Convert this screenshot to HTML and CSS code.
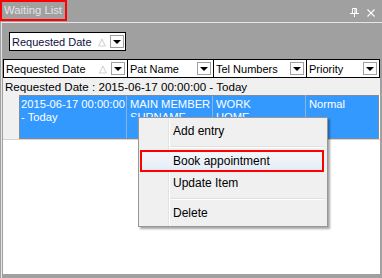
FILE: index.html
```html
<!DOCTYPE html>
<html lang="en">
<head>
    <meta charset="UTF-8">
    <title>Waiting List</title>
    <link rel="stylesheet" href="styles.css">
</head>
<body>

    <div class="window">
        <!-- Barre de titre du panneau -->
        <div class="titlebar">
            <div class="title">Waiting List</div>
            <div class="tools">
                <svg width="9" height="9" viewBox="0 0 9 9">
                    <path d="M2.5 0.5h4v5h-4z M0 5.5h9 M4.5 5.5v3.5" fill="none" stroke="#fff" stroke-width="1"/>
                    <path d="M5 1v4.5" stroke="#fff" stroke-width="1"/>
                </svg>
                <svg width="8" height="8" viewBox="0 0 8 8">
                    <path d="M0.5 0.5l7 7 M7.5 0.5l-7 7" stroke="#fff" stroke-width="1.1"/>
                </svg>
            </div>
        </div>

        <div class="panel">
            <!-- Zone de regroupement -->
            <div class="groupbar">
                <div class="chip">
                    <span class="chip-text">Requested Date</span>
                    <span class="sort">&#9651;</span>
                    <span class="dd"></span>
                </div>
            </div>

            <!-- Grille -->
            <div class="grid">
                <div class="grid-head">
                    <div class="hcell c1"><span>Requested Date</span><span class="sort">&#9651;</span><span class="dd"></span></div>
                    <div class="hcell c2"><span>Pat Name</span><span class="dd"></span></div>
                    <div class="hcell c3"><span>Tel Numbers</span><span class="dd"></span></div>
                    <div class="hcell c4"><span>Priority</span><span class="dd"></span></div>
                </div>

                <div class="group-row">Requested Date : 2015-06-17 00:00:00 - Today</div>

                <div class="data-row">
                    <div class="indent"></div>
                    <div class="row-cells">
                        <div class="dcell d1">2015-06-17 00:00:00<br>- Today</div>
                        <div class="dcell d2"><div class="clip">MAIN MEMBER<br>SURNAME</div></div>
                        <div class="dcell d3"><div class="clip">WORK<br>HOME</div></div>
                        <div class="dcell d4">Normal</div>
                    </div>
                </div>

                <div class="grid-empty"></div>
            </div>
        </div>

        <!-- Menu contextuel -->
        <div class="menu">
            <div class="item">Add entry</div>
            <div class="sep"></div>
            <div class="item active">Book appointment</div>
            <div class="item">Update Item</div>
            <div class="sep"></div>
            <div class="item">Delete</div>
        </div>
    </div>

</body>
</html>
```

FILE: styles.css
```css
body {
    margin: 0;
    padding: 0;
    background-color: #a0a0a0;
    font-family: 'Liberation Sans', Arial, sans-serif;
    font-size: 11px;
    color: #000;
}

.window {
    position: relative;
    width: 382px;
    height: 278px;
    display: flex;
    flex-direction: column;
    overflow: hidden;
}

/* Barre de titre */
.titlebar {
    height: 22px;
    display: flex;
    align-items: flex-start;
    justify-content: space-between;
}

.title {
    height: 17px;
    padding: 0 3px 0 2px;
    border: 2px solid #ff0000;
    color: #e4e4e4;
    line-height: 17px;
    font-size: 11.3px;
}

.tools {
    display: flex;
    align-items: center;
    gap: 8px;
    padding: 8px 7px 0 0;
}

.tools svg {
    display: block;
}

/* Panneau */
.panel {
    flex: 1;
    margin-left: 1px;
    border-left: 1px solid #e6e6e6;
    border-top: 1px solid #e6e6e6;
    display: flex;
    flex-direction: column;
}

.groupbar {
    height: 36px;
    box-sizing: border-box;
    padding: 9px 0 0 7px;
}

.chip {
    width: 117px;
    height: 19px;
    box-sizing: border-box;
    border: 1px solid #000;
    background-color: #fff;
    display: flex;
    align-items: center;
    padding-left: 2px;
    font-size: 11px;
    color: #101040;
}

.chip-text {
    flex: 1;
}

.sort {
    color: #b4b4b4;
    font-size: 10px;
    margin-right: 4px;
}

.dd {
    width: 14px;
    height: 13px;
    box-sizing: border-box;
    border: 1px solid #a0a0a0;
    background-color: #fff;
    display: flex;
    align-items: center;
    justify-content: center;
    margin-right: 1px;
}

.dd::after {
    content: "";
    border-left: 4px solid transparent;
    border-right: 4px solid transparent;
    border-top: 4px solid #000;
}

/* Grille */
.grid {
    height: 215px;
    margin: 0 2px 0 1px;
    background-color: #fff;
    display: flex;
    flex-direction: column;
}

.grid-head {
    display: flex;
    height: 19px;
    box-sizing: border-box;
    border-top: 1px solid #000;
    border-bottom: 1px solid #000;
    border-left: 1px solid #000;
}

.hcell {
    display: flex;
    align-items: center;
    box-sizing: border-box;
    padding-left: 2px;
    border-right: 1px solid #000;
}

.hcell span:first-child {
    flex: 1;
}

.hcell .dd {
    margin-right: 2px;
}

.c1 { width: 124px; }
.c2 { width: 86px; }
.c3 { width: 93px; }
.c4 { width: 73px; }

.group-row {
    height: 17px;
    line-height: 17px;
    padding-left: 2px;
    font-size: 11.6px;
    background-color: #f0f0f0;
}

.data-row {
    display: flex;
    height: 45px;
    box-sizing: border-box;
    border-bottom: 1px solid #d4d4d4;
}

.indent {
    width: 16px;
    background-color: #f0f0f0;
}

.row-cells {
    flex: 1;
    display: flex;
    background-color: #3399ff;
    color: #fff;
    outline: 1px dotted #c8803c;
    outline-offset: -1px;
    margin-right: 1px;
    font-size: 11.2px;
}

.dcell {
    box-sizing: border-box;
    padding: 3px 0 0 3px;
    line-height: 13px;
    border-right: 1px solid #8ab4e0;
    white-space: nowrap;
}

.clip {
    height: 19px;
    overflow: hidden;
}

.d1 { width: 108px; padding-left: 2px; }
.d2 { width: 86px; }
.d3 { width: 93px; }
.d4 { flex: 1; border-right: none; }

.grid-empty {
    flex: 1;
}

/* Menu contextuel */
.menu {
    position: absolute;
    left: 138px;
    top: 117px;
    width: 184px;
    padding: 2px 3px 2px 1px;
    border: 1px solid #979797;
    background: linear-gradient(to right, #f0f0f0 29px, #e2e3e3 29px, #e2e3e3 30px, #fff 30px, #fff 31px, #f0f0f0 31px);
    box-shadow: 2px 2px 2px rgba(0, 0, 0, 0.35);
    font-size: 12px;
}

.item {
    height: 22px;
    line-height: 22px;
    padding-left: 33px;
    box-sizing: border-box;
}

.item.active {
    border: 2px solid #ff0000;
    line-height: 18px;
    padding-left: 31px;
    background: linear-gradient(#f4f7fb, #e6edf6);
}

.sep {
    height: 8px;
    position: relative;
}

.sep::after {
    content: "";
    position: absolute;
    left: 30px;
    right: 0;
    top: 4px;
    border-top: 1px solid #e0e0e0;
    border-bottom: 1px solid #fff;
}
```
